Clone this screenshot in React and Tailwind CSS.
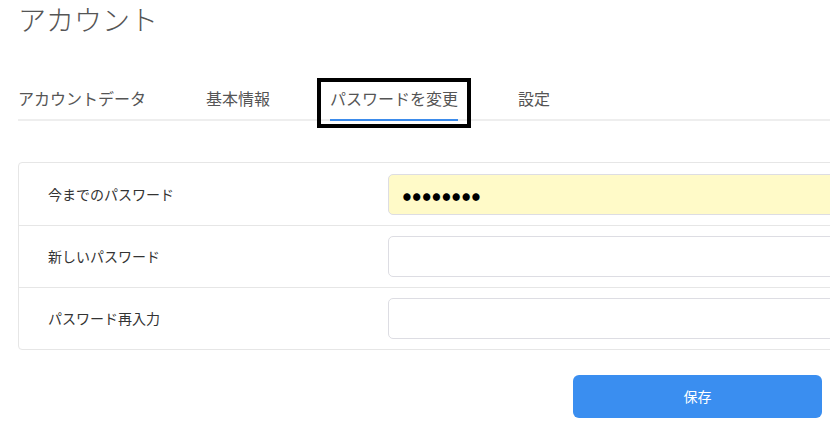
import { useState } from "react";

const tabs = ["アカウントデータ", "基本情報", "パスワードを変更", "設定"];

const fields = [
  { label: "今までのパスワード", value: "password", filled: true },
  { label: "新しいパスワード", value: "" },
  { label: "パスワード再入力", value: "" },
];

export default function App() {
  const [active, setActive] = useState(2);

  return (
    <div
      className="relative w-[830px] h-[425px] overflow-hidden bg-white pl-[18px]"
      style={{ fontFamily: '"Noto Sans CJK JP", "Noto Sans", sans-serif' }}
    >
      {/* Title */}
      <h1 className="pt-[1px] text-[28px] leading-[36px] font-light text-[#555]">アカウント</h1>

      {/* Tabs */}
      <div className="mt-[49px] flex w-[900px] gap-[60px] border-b-2 border-[#eeeeee]">
        {tabs.map((t, i) => (
          <button
            key={t}
            onClick={() => setActive(i)}
            className={`relative -mb-[2px] pb-[9px] text-[16px] leading-[24px] text-[#555] border-b-2 ${
              active === i ? "border-[#3b8beb]" : "border-transparent"
            }`}
          >
            {t}
            {active === i && (
              <span className="pointer-events-none absolute -left-[13px] -right-[13px] -top-[8px] -bottom-[9px] border-4 border-black" />
            )}
          </button>
        ))}
      </div>

      {/* Form card */}
      <div className="mt-[41px] w-[900px] rounded-[4px] border border-[#e6e6e6]">
        {fields.map((f, i) => (
          <div
            key={f.label}
            className={`flex h-[62px] items-center ${i > 0 ? "border-t border-[#e6e6e6]" : ""}`}
          >
            <div className="w-[369px] pl-[29px] text-[14px] text-[#333]">{f.label}</div>
            <input
              type="password"
              readOnly
              defaultValue={f.value}
              className={`h-[41px] flex-1 mr-[20px] rounded-[5px] border border-[#dddde3] px-[13px] text-[29px] text-black outline-none ${
                f.filled ? "bg-[#fffac8]" : "bg-white"
              }`}
            />
          </div>
        ))}
      </div>

      {/* Save */}
      <div className="mt-[25px] flex w-[804px] justify-end">
        <button className="h-[43px] w-[249px] rounded-[6px] bg-[#3a8ef0] text-[14px] text-white">
          保存
        </button>
      </div>
    </div>
  );
}
